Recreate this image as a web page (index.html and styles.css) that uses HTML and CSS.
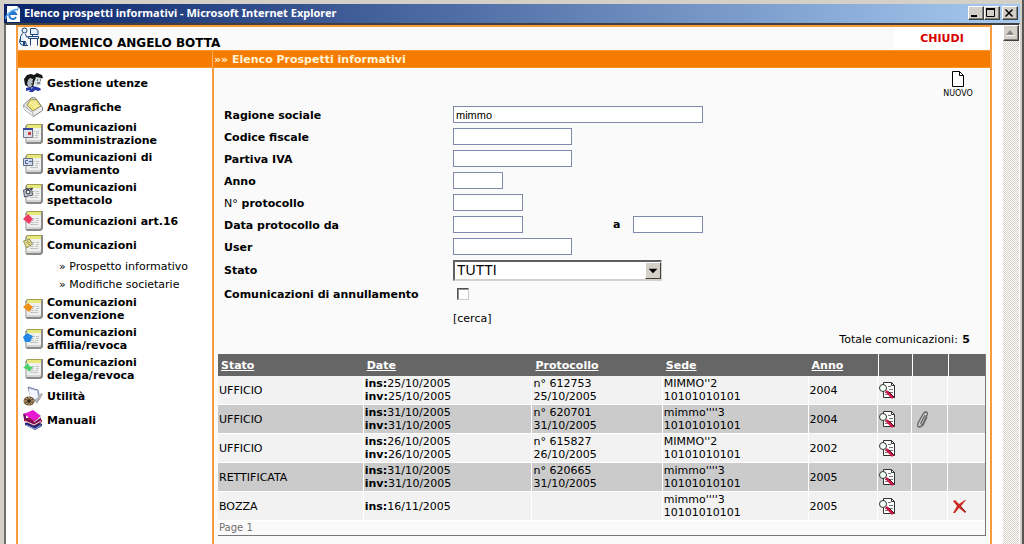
FILE: index.html
```html
<!DOCTYPE html>
<html lang="it">
<head>
<meta charset="utf-8">
<title>Elenco prospetti informativi</title>
<link rel="stylesheet" href="styles.css">
</head>
<body>
<svg class="defs" aria-hidden="true">
  <symbol id="doc" viewBox="0 0 20 20">
    <path d="M4 0h16v18l-2 2H4l-2-2V3z" fill="#8a8a8a"/>
    <path d="M4 1h14v15l-1 1H4z" fill="#f0f1ee"/>
    <path d="M4 1h14v3H4z" fill="#e9e87c"/>
    <path d="M4 .5h15" stroke="#a0a050"/>
    <path d="M2 4l2-1v13l-2 2z" fill="#c4c4c0"/>
    <path d="M2 18l2-2h13l1-1v2l-1 1z" fill="#d4d4d0"/>
    <path d="M9 7.500h3m1 0h3M9 9.500h2m2 0h3M7 11.500h4m1 0h3M7 13.500h8" stroke="#c0c4c4"/>
  </symbol>
  <symbol id="view" viewBox="0 0 17 17">
    <path d="M4.500.5h8l3 3v12h-11z" fill="#fff" stroke="#333"/>
    <path d="M12.500.5v3h3" fill="none" stroke="#333"/>
    <path d="M9 4.500h3M10 7.500h4M11 10.500h3M6 10.500h2M6 12.500h3" stroke="#777"/>
    <path d="M7 9l7 7" stroke="#d01848" stroke-width="2.500"/>
    <path d="M9.500 9.500l6 6" stroke="#501020"/>
    <circle cx="4" cy="6" r="3.500" fill="#f4fff8" stroke="#333"/>
  </symbol>
</svg>

<header class="titlebar">
  <svg class="app-icon" viewBox="0 0 16 16"><path d="M2 0h10l3 3v13H2z" fill="#fff"/><path d="M12 0v3h3" fill="#b8c8dc"/><path d="M11 11a3.500 3.500 0 1 1 0-3H5" fill="none" stroke="#2878d0" stroke-width="2"/><path d="M1 13C-1 10 9 2 13 4" fill="none" stroke="#4ca0ec" stroke-width="1.500"/></svg>
  <span class="window-title">Elenco prospetti informativi - Microsoft Internet Explorer</span>
  <button class="win-button" aria-label="Riduci"><svg viewBox="0 0 12 10"><path d="M2 8h6" stroke="#000" stroke-width="2"/></svg></button>
  <button class="win-button" aria-label="Ingrandisci"><svg viewBox="0 0 12 10"><path d="M1.500 1v7.500h8V1" fill="none" stroke="#000"/><path d="M1 1h9" stroke="#000" stroke-width="2"/></svg></button>
  <button class="win-button win-close" aria-label="Chiudi finestra"><svg viewBox="0 0 12 10"><path d="M2.500 1.500l7 7m0-7l-7 7" stroke="#000" stroke-width="1.500"/></svg></button>
</header>

<div class="viewport">
  <div class="page">
    <div class="userbar">
      <div class="user">
        <svg class="user-icon" viewBox="0 0 20 20" fill="#e4f0fc" stroke="#1c4478"><circle cx="5.500" cy="3.500" r="2.500"/><path d="M3.500 6.500l-2 3v5h5l1 4M6.500 7l1 3h3M1.500 11l-1 4 2 3h2v-3M4 18.500h5M5.500 14.500v4"/><path d="M9.500 9.500h10v2h-10zM11.500 11.500v7M18.500 11.500v7M11.500 1.500h5l2.500 2v4h-7.500zM13.500 7.500v2"/></svg>
        <strong>DOMENICO ANGELO BOTTA</strong>
      </div>
      <div class="close-cell"><a href="#">CHIUDI</a></div>
    </div>
    <div class="band"><div class="band-side"></div><h1>»» Elenco Prospetti informativi</h1></div>
    <div class="columns">
      <nav>
        <ul class="menu">
          <li><svg viewBox="0 0 20 20"><path d="M1 6l3-4 4-1 3 1 3-2 5 2 1 3-4 1-4 1-2 7-3 1-5-3z" fill="#161616"/><path d="M7 5l3 1v2l-1 5-3 2-2-4 1-4z" fill="#b4bcc4"/><path d="M13 4l5 1v6l-2 2h-3l-2-3z" fill="#d4dce0"/><path d="M14 7h1m2 0h1m-9 1h1m-2 3h2m4-1h3" stroke="#333"/><path d="M3 15l4-1 2 2 1-3 4 1 3 1 1 2-3 1-3-1-2 2H6l1-2-4 1z" fill="#2238a8"/></svg><a href="#">Gestione utenze</a></li>
          <li><svg viewBox="0 0 20 20"><path d="M.5 8l8-7.500 4 .5 7 9.500v3l-9 6-9-7z" fill="#e2e2e2" stroke="#888"/><path d="M4 8l4-6 4 1 1-1 5 7-8 5z" fill="#f0e67c" stroke="#98945c"/><path d="M7 5l6 6M10 4l5 6" stroke="#fff8c0" fill="none"/><path d="M1 9l9 6 9-5v3l-9 6-9-7z" fill="#eee"/><path d="M1 9l9 6.500v3.500" stroke="#aaa" fill="none"/></svg><a href="#">Anagrafiche</a></li>
          <li><svg viewBox="0 0 20 20"><use href="#doc"/><path d="M.5 4.500h9v9h-9z" fill="#dde2ec" stroke="#778"/><path d="M0 5h10" stroke="#3848a0" stroke-width="2"/><path d="M5 8h3v3H5z" fill="#d03c38"/></svg><a href="#">Comunicazioni<br>somministrazione</a></li>
          <li><svg viewBox="0 0 20 20"><use href="#doc"/><path d="M.5 4.500h9v7h-9z" fill="#d0daea" stroke="#68748c"/><path d="M5 6.500H2.500v3H5m1-2h3" stroke="#4868a0" fill="none"/></svg><a href="#">Comunicazioni di<br>avviamento</a></li>
          <li><svg viewBox="0 0 20 20"><use href="#doc"/><path d="M.5 6l8-2 1 7-8 2z" fill="#c0c8d0" stroke="#556"/><circle cx="5" cy="8" r="2" fill="#eef" stroke="#222"/><path d="M3 4l3 2m1 0l3-2" stroke="#222"/></svg><a href="#">Comunicazioni<br>spettacolo</a></li>
          <li><svg viewBox="0 0 20 20"><use href="#doc"/><path d="M0 8l5-5 5 5-4 5z" fill="#ee3c68"/></svg><a href="#">Comunicazioni art.16</a></li>
          <li><svg viewBox="0 0 20 20"><use href="#doc"/><path d="M.5 6l6-2 3 5-6 4z" fill="#e6dc8c" stroke="#94905c"/><path d="M3 7l4 3m-3-4l3 2" stroke="#a09c64"/></svg><a href="#">Comunicazioni</a></li>
        </ul>
        <ul class="submenu">
          <li><a href="#">» Prospetto informativo</a></li>
          <li><a href="#">» Modifiche societarie</a></li>
        </ul>
        <ul class="menu">
          <li><svg viewBox="0 0 20 20"><use href="#doc"/><path d="M0 8l5-4 5 4-4 5z" fill="#f09018"/></svg><a href="#">Comunicazioni<br>convenzione</a></li>
          <li><svg viewBox="0 0 20 20"><use href="#doc"/><path d="M0 8l4-4 6 3-3 6-5 0z" fill="#2488e4"/></svg><a href="#">Comunicazioni<br>affilia/revoca</a></li>
          <li><svg viewBox="0 0 20 20"><use href="#doc"/><path d="M0 9l5-5 1 3 4 1-4 5-2-3z" fill="#48d068"/></svg><a href="#">Comunicazioni<br>delega/revoca</a></li>
          <li><svg viewBox="0 0 20 20"><path d="M5 1l10 3 2 9-8 3z" fill="#b8c0dc" stroke="#7c84a4"/><path d="M6 3l8 2 1 7-8 2z" fill="#f4f6ff"/><path d="M12 15l6-8 2 1-6 10z" fill="#b0b0b0"/><ellipse cx="6" cy="15" rx="5.500" ry="4.500" fill="#705838"/><path d="M1 15h10M6 11v8M3 12l6 6m0-6l-6 6" stroke="#c8ac74"/><circle cx="6" cy="15" r="2" fill="#332c20"/></svg><a href="#">Utilità</a></li>
          <li><svg viewBox="0 0 20 20"><path d="M2 13l9-3 8 4v2l-7 4-10-5z" fill="#202878"/><path d="M3 15l9 4 6-4" stroke="#a8b4e0" fill="none"/><path d="M1 9l9-3 9 4v2l-8 4-10-5z" fill="#a01838"/><path d="M2 11l9 4 7-4" stroke="#e8dce0" fill="none"/><path d="M0 4l3-1v5l8 4 7-5v3l-7 4-10-5z" fill="#781060"/><path d="M1 4l9-4 8 6-7 5z" fill="#e818d0"/><path d="M11 12l7-5" stroke="#ddd"/></svg><a href="#">Manuali</a></li>
        </ul>
      </nav>

      <main>
        <a class="new-link" href="#"><svg viewBox="0 0 14 16"><path d="M1.500.5h7l4 4v11h-11z" fill="#fff" stroke="#000"/><path d="M8.500.5v4h4" fill="none" stroke="#000"/></svg>NUOVO</a>
        <form class="search">
          <label for="ragione">Ragione sociale</label><div><input class="box wide" id="ragione" type="text" value="mimmo"></div>
          <label for="cf">Codice fiscale</label><div><input class="box medium" id="cf" type="text"></div>
          <label for="iva">Partiva IVA</label><div><input class="box medium" id="iva" type="text"></div>
          <label for="anno">Anno</label><div><input class="box tiny" id="anno" type="text"></div>
          <label for="prot"><span class="plain">N°</span> protocollo</label><div><input class="box short" id="prot" type="text"></div>
          <label for="da">Data protocollo da</label><div class="range"><input class="box short" id="da" type="text"><label for="al">a</label><input class="box short" id="al" type="text"></div>
          <label for="user">User</label><div><input class="box medium" id="user" type="text"></div>
          <label for="stato">Stato</label><div class="tall select-wrap"><select id="stato"><option>TUTTI</option></select><svg class="drop" viewBox="0 0 16 16"><path d="M3 6h10l-5 5z"/></svg></div>
          <label for="ann">Comunicazioni di annullamento</label><div class="tall"><input class="check" id="ann" type="checkbox"></div>
          <div class="tall submit"><button class="search-button" type="button">[cerca]</button></div>
        </form>
        <p class="total">Totale comunicazioni: <b>5</b></p>
        <table>
          <colgroup><col class="c-stato"><col class="c-date"><col class="c-prot"><col class="c-sede"><col class="c-anno"><col class="c-view"><col class="c-clip"><col></colgroup>
          <thead><tr><th><a href="#">Stato</a></th><th><a href="#">Date</a></th><th><a href="#">Protocollo</a></th><th><a href="#">Sede</a></th><th><a href="#">Anno</a></th><th class="split"></th><th class="split"></th><th class="split"></th></tr></thead>
          <tbody>
            <tr><td>UFFICIO</td><td><b>ins:</b>25/10/2005<br><b>inv:</b>25/10/2005</td><td>n° 612753<br>25/10/2005</td><td>MIMMO''2<br>10101010101</td><td>2004</td><td><a href="#" aria-label="Visualizza"><svg class="view"><use href="#view"/></svg></a></td><td></td><td></td></tr>
            <tr><td>UFFICIO</td><td><b>ins:</b>31/10/2005<br><b>inv:</b>31/10/2005</td><td>n° 620701<br>31/10/2005</td><td>mimmo''''3<br>10101010101</td><td>2004</td><td><a href="#" aria-label="Visualizza"><svg class="view"><use href="#view"/></svg></a></td><td><a href="#" aria-label="Allegato"><svg class="clip" viewBox="0 0 14 17"><path d="M9 4L5 12q0 2 2 1l4-9q1-3-1-3t-3 2L2 12q-1 4 1 4t4-2l4-8" fill="none" stroke="#666" stroke-width="1.300"/></svg></a></td><td></td></tr>
            <tr><td>UFFICIO</td><td><b>ins:</b>26/10/2005<br><b>inv:</b>26/10/2005</td><td>n° 615827<br>26/10/2005</td><td>MIMMO''2<br>10101010101</td><td>2002</td><td><a href="#" aria-label="Visualizza"><svg class="view"><use href="#view"/></svg></a></td><td></td><td></td></tr>
            <tr><td>RETTIFICATA</td><td><b>ins:</b>31/10/2005<br><b>inv:</b>31/10/2005</td><td>n° 620665<br>31/10/2005</td><td>mimmo''''3<br>10101010101</td><td>2005</td><td><a href="#" aria-label="Visualizza"><svg class="view"><use href="#view"/></svg></a></td><td></td><td></td></tr>
            <tr><td>BOZZA</td><td><b>ins:</b>16/11/2005</td><td></td><td>mimmo''''3<br>10101010101</td><td>2005</td><td><a href="#" aria-label="Visualizza"><svg class="view"><use href="#view"/></svg></a></td><td></td><td><a href="#" aria-label="Elimina"><svg class="delete" viewBox="0 0 15 14"><path d="M1 2l2-1 4 4 6-4 1 0-5 6 5 6-1 1-6-5-4 5H1l4-7z" fill="#cc2a20"/><path d="M8 7l6 6" stroke="#783030"/></svg></a></td></tr>
          </tbody>
          <tfoot><tr><td colspan="8">Page 1</td></tr></tfoot>
        </table>
      </main>
    </div>
  </div>
  <div class="scrollbar"><button class="scroll-up" aria-label="Scorri su"><svg viewBox="0 0 12 12"><path d="M2 9l4-5 5 5z" fill="#fff"/><path d="M2 8l4-5 4 5z" fill="#888"/></svg></button></div>
</div>
</body>
</html>
```
FILE: styles.css
```css
* { box-sizing: border-box; }
body {
  margin: 0;
  height: 100vh;
  overflow: hidden;
  display: flex;
  flex-direction: column;
  padding: 4px 2px 0 4px;
  background: #d4d0c8;
  border-right: 2px solid #555;
  color: #000;
  font: 11px/13px "DejaVu Sans", Verdana, sans-serif;
}
a { color: inherit; text-decoration: none; }
ul { list-style: none; margin: 0; padding: 0; }
svg { display: block; flex: none; }
button { font: inherit; color: inherit; }
.defs { position: absolute; width: 0; height: 0; }

.titlebar {
  display: flex;
  align-items: center;
  flex: none;
  height: 19px;
  padding: 0 2px 0 0;
  background: linear-gradient(to right, #0a246a, #a6caf0);
}
.app-icon { width: 16px; height: 16px; margin: 0 3px 0 1px; }
.window-title { flex: 1; color: #fff; font: bold 11px/17px "Noto Sans", Tahoma, sans-serif; padding-bottom: 2px; white-space: nowrap; }
.win-button, .scroll-up {
  padding: 0;
  background: #d4d0c8;
  border: 1px solid;
  border-color: #fff #404040 #404040 #fff;
  box-shadow: inset -1px -1px #808080;
}
.win-button { width: 16px; height: 14px; margin-bottom: 2px; }
.win-button svg { width: 12px; height: 10px; }
.win-close { margin-left: 2px; }

.viewport {
  display: flex;
  flex: 1;
  min-height: 0;
  border-top: 2px solid #404040;
  border-left: 2px solid #707070;
  border-right: 1px solid #fff;
  background: #fff;
}
.page {
  flex: 1;
  display: flex;
  flex-direction: column;
  margin: 0 11px 0 10px;
  border: 2px solid #f79b3e;
  border-bottom: 0;
  background: #fafafa;
}
.userbar { display: flex; flex: none; height: 23px; }
.user { flex: 1; display: flex; align-items: flex-end; padding: 0 0 0 1px; font: bold 12px/14px "DejaVu Sans", Verdana, sans-serif; }
.user-icon { width: 20px; height: 20px; margin-bottom: 3px; }
.close-cell { width: 96px; background: #fff; color: #d80000; font-size: 11px; font-weight: bold; line-height: 23px; text-align: center; }
.band { display: flex; flex: none; height: 18px; background: #f57c00; border: solid #f99530; border-width: 1px 0; }
.band-side { width: 195px; border-right: 1px solid #fbb060; }
.band h1 { margin: 0; padding-left: 1px; color: #fff3d6; font-size: 11px; line-height: 17px; }
.columns { flex: 1; display: flex; min-height: 0; }

nav { flex: none; width: 196px; padding-top: 3px; background: #fff; border-right: 2px solid #f79b3e; }
.menu li { display: flex; align-items: center; gap: 4px; min-height: 24px; padding: 2px 0 2px 5px; font-weight: bold; }
.menu svg { width: 20px; height: 20px; }
.submenu { padding-top: 1px; }
.submenu li { padding-left: 41px; line-height: 18px; }

main { flex: 1; min-width: 0; padding: 3px 4px 0; }
.new-link { display: flex; flex-direction: column; align-items: center; width: 32px; margin: 0 12px 0 auto; height: 33px; font-size: 8px; line-height: 13px; }
.new-link svg { width: 14px; height: 16px; }
.search { display: grid; grid-template-columns: 229px 1fr; padding-left: 6px; align-items: center; }
.search > label, .range label { font-weight: bold; }
.plain { font-weight: normal; }
.search > div { display: flex; align-items: center; height: 22px; padding-bottom: 1px; }
.search > .tall { height: 24px; padding: 0; }
.submit { grid-column: 2; }
.box {
  height: 17px;
  margin: 0;
  padding: 0 2px;
  border: 1px solid #8089ac;
  background: #fff;
  font: 11px/15px "Liberation Sans", Tahoma, sans-serif;
}
.wide { width: 250px; }
.medium { width: 119px; }
.tiny { width: 50px; }
.short { width: 70px; }
.range label { width: 110px; padding-left: 90px; }
.select-wrap { position: relative; width: 209px; }
select {
  appearance: none;
  width: 100%;
  height: 21px;
  margin: 0;
  padding: 0 20px 0 2px;
  border: 2px solid;
  border-color: #606060 #d4d0c8 #d4d0c8 #606060;
  border-radius: 0;
  background: #fff;
  color: #000;
  font: 14px/16px "Liberation Sans", Tahoma, sans-serif;
}
.drop {
  position: absolute;
  right: 1px;
  top: 4px;
  width: 16px;
  height: 17px;
  border: 1px solid;
  border-color: #fff #404040 #404040 #fff;
  background: #d4d0c8;
  pointer-events: none;
}
.check { appearance: none; width: 12px; height: 12px; margin: 0 0 0 4px; border: 1px solid; border-color: #505050 #c8c8c8 #c8c8c8 #505050; box-shadow: inset 1px 1px #909090; background: #fff; }
.search-button { padding: 0; border: 0; background: none; }
.total { margin: 0; padding: 3px 16px 8px 0; text-align: right; }
.total b { margin-left: 1px; }

table { width: 100%; table-layout: fixed; border-collapse: separate; border-spacing: 0; border: solid #777; border-width: 0 1px 1px 0; }
.c-stato, .c-sede { width: 19%; }
.c-date { width: 22%; }
.c-prot { width: 17%; }
.c-anno { width: 9%; }
.c-view { width: 34px; }
.c-clip { width: 36px; }
th { height: 22px; padding: 0 3px; background: #666; color: #fff; text-align: left; }
th a { text-decoration: underline; }
.split { border-left: 1px solid #fff; }
tbody td { height: 29px; padding: 1px; background: #f2f2f2; border-right: 1px solid #fff; border-bottom: 1px solid #fff; }
tbody td:last-child { border-right: 0; }
tbody tr:nth-child(even) td { background: #cbcbcb; }
tfoot td { height: 14px; padding: 0 1px; color: #707070; font-size: 10px; line-height: 14px; }
.view { width: 17px; height: 17px; }
.clip { width: 14px; height: 17px; margin-left: 3px; }
.delete { width: 15px; height: 14px; margin-left: 3px; }

.scrollbar { width: 16px; background: repeating-conic-gradient(#fff 0 25%, #d4d0c8 0 50%) 0 0 / 2px 2px; }
.scroll-up { display: block; width: 16px; height: 16px; }
.scroll-up svg { width: 12px; height: 12px; }
```
